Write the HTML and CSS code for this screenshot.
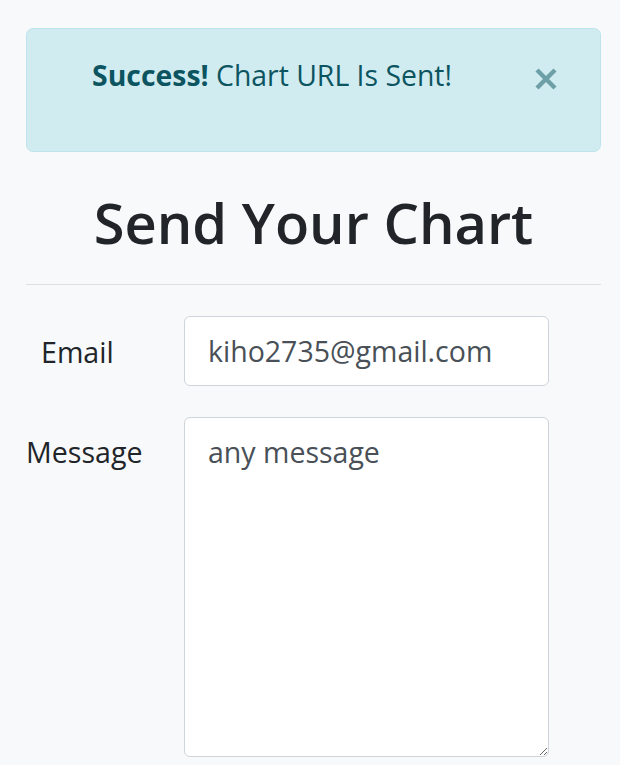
FILE: index.html
```html
<!DOCTYPE html>
<html lang="en">
<head>
<meta charset="utf-8">
<title>Send Your Chart</title>
<link rel="stylesheet" href="styles.css">
</head>
<body>
<div class="container">
  <div class="alert">
    <p class="alert-msg"><strong class="alert-strong">Success!</strong> Chart URL Is Sent!</p>
    <button class="close" type="button" aria-label="Close">
      <svg class="close-icon" width="22" height="22" viewBox="0 0 22 22"><path d="M2 2 L20 20 M20 2 L2 20" stroke="currentColor" stroke-width="4.4" fill="none"/></svg>
    </button>
  </div>
  <h1 class="title">Send Your Chart</h1>
  <hr class="rule">
  <form class="form">
    <div class="row row-email">
      <label class="label label-email" for="email">Email</label>
      <input class="field" id="email" type="text" value="kiho2735@gmail.com">
    </div>
    <div class="row row-message">
      <label class="label label-message" for="msg">Message</label>
      <textarea class="field area" id="msg">any message</textarea>
    </div>
  </form>
</div>
</body>
</html>
```

FILE: styles.css
```css
html, body {
  margin: 0;
  padding: 0;
  background: #f8f9fa;
}
body {
  font-family: "Open Sans", "Noto Sans", sans-serif;
  color: #212529;
  font-size: 28px;
}
.container {
  width: 575px;
  padding: 28px 0 0 26px;
  box-sizing: content-box;
}
.alert {
  box-sizing: border-box;
  height: 124px;
  background: #d1ecf1;
  border: 1px solid #bee5eb;
  border-radius: 7px;
  color: #0c5460;
  display: flex;
  align-items: flex-start;
  padding: 16px 34px 0 65px;
}
.alert-msg {
  margin: 0;
  flex: 1;
  line-height: 60px;
  font-size: 28.4px;
}
.alert-strong {
  font-weight: 700;
}
.close {
  background: none;
  border: 0;
  padding: 0;
  margin: 23px 9px 0 0;
  color: #0c5460;
  opacity: 0.5;
  display: flex;
  cursor: pointer;
}
.close-icon {
  display: block;
}
.title {
  margin: 33px 0 0;
  height: 74px;
  line-height: 74px;
  font-size: 56px;
  font-weight: 600;
  text-align: center;
}
.rule {
  margin: 25px 0 0;
  border: 0;
  border-top: 1px solid #dfe0e1;
  height: 0;
}
.form {
  margin-top: 31px;
  display: flex;
  flex-direction: column;
  gap: 31px;
}
.row {
  display: grid;
  grid-template-columns: 158px 365px;
}
.row-email {
  align-items: center;
}
.label {
  font-size: 28.6px;
  line-height: 45px;
}
.label-email {
  padding-left: 15px;
}
.label-message {
  padding-top: 12px;
  align-self: start;
}
.field {
  box-sizing: border-box;
  width: 365px;
  height: 70px;
  margin: 0;
  padding: 0 23px;
  font-family: "Open Sans", "Noto Sans", sans-serif;
  font-size: 28.5px;
  color: #495057;
  background: #fff;
  border: 1px solid #ced4da;
  border-radius: 6px;
  outline: none;
}
.area {
  height: 340px;
  padding: 12px 23px;
  line-height: 45px;
  resize: vertical;
}
```
